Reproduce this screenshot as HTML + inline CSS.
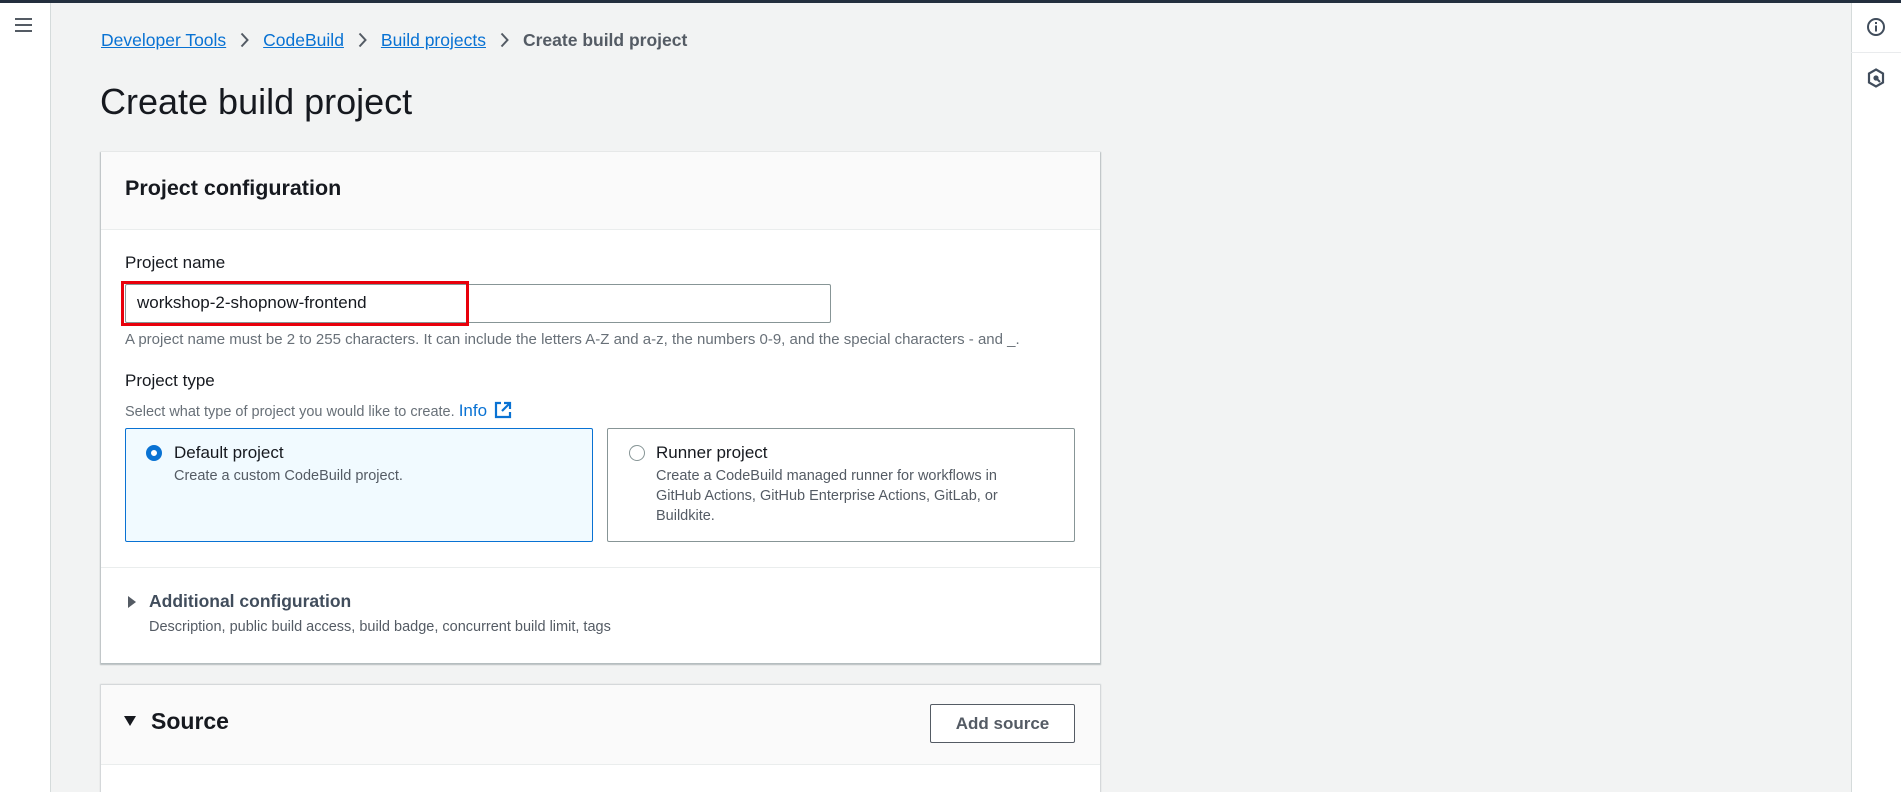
<!DOCTYPE html>
<html><head><meta charset="utf-8"><style>
*{box-sizing:border-box;margin:0;padding:0}
html,body{width:1901px;height:792px;overflow:hidden}
body{background:#f2f3f3;font-family:"Liberation Sans",Arial,sans-serif;color:#16191f;position:relative}
.abs{position:absolute;white-space:nowrap}
a{color:#0972d3;text-decoration:underline}
.chev{display:inline-block;margin:0 14px;vertical-align:-2px}
</style></head><body>
<div class="abs" style="left:0;top:0;width:1901px;height:3px;background:#232f3e"></div>
<div class="abs" style="left:0;top:3px;width:51px;height:789px;background:#fff;border-right:1px solid #d5dbdb"></div>
<div class="abs" style="left:15px;top:18px;width:17px;height:2px;background:#545b64;box-shadow:0 6px 0 #545b64,0 12px 0 #545b64"></div>
<div class="abs" style="left:1851px;top:3px;width:50px;height:789px;background:#fff;border-left:1px solid #d5dbdb"></div>
<div class="abs" style="left:1851px;top:52px;width:50px;height:1px;background:#e9ebed"></div>
<svg class="abs" style="left:1866px;top:17px" width="20" height="20" viewBox="0 0 20 20"><circle cx="10" cy="10" r="8" fill="none" stroke="#414d5c" stroke-width="2"/><rect x="9" y="8.5" width="2" height="6" fill="#414d5c"/><rect x="9" y="5" width="2" height="2" fill="#414d5c"/></svg>
<svg class="abs" style="left:1867px;top:68px" width="18" height="20" viewBox="0 0 18 20"><path d="M9 1.5L16 5.5V14.5L9 18.5L2 14.5V5.5Z" fill="none" stroke="#414d5c" stroke-width="2.2"/><circle cx="9" cy="10" r="2.6" fill="#414d5c"/><path d="M10 11L13 14" stroke="#414d5c" stroke-width="2"/></svg>

<div class="abs" style="left:101px;top:30px;font-size:17.5px;line-height:20px;color:#545b64">
<a>Developer Tools</a><svg class="chev" width="9" height="16" viewBox="0 0 9 16"><path d="M1.5 1.5L7.5 8L1.5 14.5" fill="none" stroke="#545b64" stroke-width="2"/></svg><a>CodeBuild</a><svg class="chev" width="9" height="16" viewBox="0 0 9 16"><path d="M1.5 1.5L7.5 8L1.5 14.5" fill="none" stroke="#545b64" stroke-width="2"/></svg><a>Build projects</a><svg class="chev" width="9" height="16" viewBox="0 0 9 16"><path d="M1.5 1.5L7.5 8L1.5 14.5" fill="none" stroke="#545b64" stroke-width="2"/></svg><b style="color:#545b64">Create build project</b></div>
<div class="abs" style="left:100px;top:81px;font-size:36px;line-height:42px;color:#16191f">Create build project</div>

<div class="abs" style="left:101px;top:152px;width:999px;height:511px;background:#fff;box-shadow:0 1px 1px 1px rgba(0,28,36,.25)"></div>
<div class="abs" style="left:101px;top:152px;width:999px;height:78px;background:#fafafa;border-bottom:1px solid #eaeded"></div>
<div class="abs" style="left:125px;top:176px;font-size:21.5px;font-weight:bold;line-height:24px">Project configuration</div>
<div class="abs" style="left:125px;top:253px;font-size:17px;line-height:20px">Project name</div>
<div class="abs" style="left:125px;top:284px;width:706px;height:39px;border:1px solid #879596;border-radius:2px;background:#fff"></div>
<div class="abs" style="left:121px;top:281px;width:348px;height:45px;border:3px solid #e8000b"></div>
<div class="abs" style="left:137px;top:293px;font-size:17px;line-height:20px">workshop-2-shopnow-frontend</div>
<div class="abs" style="left:125px;top:331px;font-size:15px;line-height:17px;color:#687078">A project name must be 2 to 255 characters. It can include the letters A-Z and a-z, the numbers 0-9, and the special characters - and _.</div>
<div class="abs" style="left:125px;top:371px;font-size:17px;line-height:20px">Project type</div>
<div class="abs" style="left:125px;top:401px;font-size:14.5px;line-height:18px;color:#687078">Select what type of project you would like to create. <span style="color:#0972d3;font-size:17px">Info</span>
<svg width="18" height="18" viewBox="0 0 18 18" style="vertical-align:-3px;margin-left:3px"><path d="M7 2H2V16H16V11M10 2H16V8M16 2L8 10" fill="none" stroke="#0972d3" stroke-width="2.2"/></svg></div>

<div class="abs" style="left:125px;top:428px;width:468px;height:114px;border:1px solid #0972d3;border-radius:2px;background:#f1faff"></div>
<div class="abs" style="left:146px;top:445px;width:16px;height:16px;border-radius:50%;border:5px solid #0972d3;background:#fff"></div>
<div class="abs" style="left:174px;top:443px;font-size:17px;line-height:20px">Default project</div>
<div class="abs" style="left:174px;top:468px;font-size:14.5px;line-height:17px;color:#545b64">Create a custom CodeBuild project.</div>

<div class="abs" style="left:607px;top:428px;width:468px;height:114px;border:1px solid #879596;border-radius:2px;background:#fff"></div>
<div class="abs" style="left:629px;top:445px;width:16px;height:16px;border-radius:50%;border:1px solid #879596"></div>
<div class="abs" style="left:656px;top:443px;font-size:17px;line-height:20px">Runner project</div>
<div class="abs" style="left:656px;top:466px;font-size:14.5px;line-height:20px;color:#545b64">Create a CodeBuild managed runner for workflows in<br>GitHub Actions, GitHub Enterprise Actions, GitLab, or<br>Buildkite.</div>

<div class="abs" style="left:101px;top:567px;width:999px;height:1px;background:#eaeded"></div>
<svg class="abs" style="left:127px;top:595px" width="10" height="14" viewBox="0 0 10 14"><path d="M1 1L9 7L1 13Z" fill="#545b64"/></svg>
<div class="abs" style="left:149px;top:591px;font-size:17.5px;font-weight:bold;line-height:20px;color:#414d5c">Additional configuration</div>
<div class="abs" style="left:149px;top:619px;font-size:14.5px;line-height:17px;color:#545b64">Description, public build access, build badge, concurrent build limit, tags</div>

<div class="abs" style="left:101px;top:685px;width:999px;height:107px;background:#fff;box-shadow:0 0 1px 1px rgba(0,28,36,.15)"></div>
<div class="abs" style="left:101px;top:685px;width:999px;height:80px;background:#fafafa;border-bottom:1px solid #eaeded"></div>
<svg class="abs" style="left:124px;top:716px" width="12" height="10" viewBox="0 0 12 10"><path d="M0 0H12L6 10Z" fill="#16191f"/></svg>
<div class="abs" style="left:151px;top:708px;font-size:23px;font-weight:bold;line-height:26px">Source</div>
<div class="abs" style="left:930px;top:704px;width:145px;height:39px;border:1px solid #545b64;border-radius:2px;background:#fff;font-size:17px;font-weight:bold;color:#545b64;text-align:center;line-height:37px">Add source</div>
</body></html>
